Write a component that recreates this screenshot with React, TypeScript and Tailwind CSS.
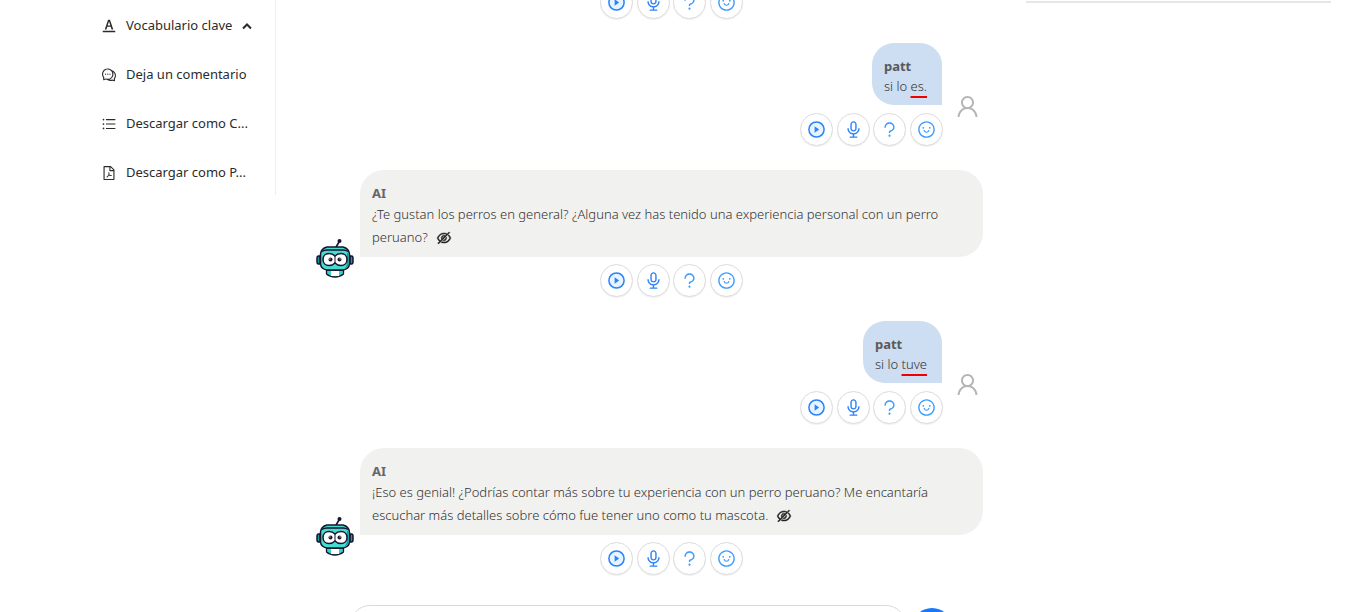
import type { ReactNode } from "react";
import {
  AiOutlineAudio,
  AiOutlineComment,
  AiOutlineEyeInvisible,
  AiOutlineFilePdf,
  AiOutlineFontColors,
  AiOutlineQuestion,
  AiOutlineSmile,
  AiOutlineUnorderedList,
  AiOutlineUser
} from "react-icons/ai";

function PlayIcon({ className }: { className?: string }) {
  return (
    <svg viewBox="0 0 20 20" className={className} aria-hidden="true">
      <circle cx="10" cy="10" r="8" fill="#e6f4ff" stroke="currentColor" strokeWidth="1.6" />
      <path d="M8 6.6v6.8l4.800-3.400z" fill="currentColor" />
    </svg>
  );
}

const menuItems = [
  { label: "Vocabulario clave", icon: AiOutlineFontColors, open: true },
  { label: "Deja un comentario", icon: AiOutlineComment },
  { label: "Descargar como C...", icon: AiOutlineUnorderedList },
  { label: "Descargar como P...", icon: AiOutlineFilePdf }
];

const actions = [
  { label: "Reproducir", icon: PlayIcon, color: "text-[#2b83fb]" },
  { label: "Grabar", icon: AiOutlineAudio, color: "text-[#2b83fb]" },
  { label: "Ayuda", icon: AiOutlineQuestion, color: "text-[#3b9cff]" },
  { label: "Reaccionar", icon: AiOutlineSmile, color: "text-[#3b9cff]" }
];

function Actions() {
  return (
    <div className="flex w-[143px] justify-between">
      {actions.map(({ label, icon: Icon, color }) => (
        <button
          key={label}
          type="button"
          aria-label={label}
          className={`flex size-[33px] items-center justify-center rounded-full border border-[#dcdcdc] bg-white shadow-[0_1px_1px_rgba(0,0,0,0.06)] ${color}`}
        >
          <Icon className="size-[19px]" />
        </button>
      ))}
    </div>
  );
}

function Robot() {
  return (
    <svg viewBox="0 0 40 40" className="h-10 w-10" aria-hidden="true">
      <path d="M20.500 10 24 4" stroke="#17132f" strokeWidth="1.6" />
      <circle cx="24.500" cy="3" r="2" fill="#17132f" />
      <path d="M5 18H3.500Q2 18 2 20.500v3Q2 26 3.500 26H5zM35 18h1.500q1.500 0 1.500 2.500v3q0 2.500-1.500 2.500H35z" fill="#169b9c" stroke="#17132f" strokeWidth="1.500" />
      <path d="M11.500 32v4q3.500 3 8.500 3t8.500-3v-4z" fill="#35d3c7" stroke="#17132f" strokeWidth="1.300" />
      <path d="M16 33h8v5h-8z" fill="#fff" />
      <path d="M12 9h16q6 1.500 6.500 7v10q-.5 5-6.500 6H12q-6-1-6.500-6V16q.5-5.500 6.500-7z" fill="#45ddd0" stroke="#17132f" strokeWidth="1.500" />
      <path d="M7 13.500q2-1.500 5-1.500h16q3 0 5 1.500" fill="none" stroke="#17132f" strokeWidth="1.500" />
      <path d="M32 15h1.500v11q-.5 3.500-4 4.500 2.500-2 2.500-5z" fill="#159a9e" />
      <path d="M14 15.500c2.800 0 4.500.9 6 2.500 1.500-1.600 3.200-2.500 6-2.500 3.600 0 6 2.600 6 6s-2.400 6-6 6c-2.800 0-4.500-.9-6-2.500-1.500 1.600-3.200 2.500-6 2.500-3.600 0-6-2.600-6-6s2.400-6 6-6z" fill="#fff" stroke="#17132f" strokeWidth="1.500" />
      <circle cx="15.500" cy="21.500" r="2" fill="#17132f" />
      <circle cx="24.500" cy="21.500" r="2" fill="#17132f" />
      <circle cx="14.900" cy="20.900" r=".6" fill="#fff" />
      <circle cx="25.100" cy="20.900" r=".6" fill="#fff" />
      <path d="M20 18v7" stroke="#17132f" strokeWidth="1" />
    </svg>
  );
}

function UserMessage({ children }: { children: ReactNode }) {
  return (
    <article className="flex items-start justify-end pr-[2px]">
      <div className="flex flex-col items-end gap-2">
        <div className="mr-px rounded-[22px] rounded-br-none bg-[#cdddf2] pt-[13px] pr-[15px] pb-2 pl-3">
          <h3 className="leading-5 font-bold text-[#595959]">patt</h3>
          <p className="leading-[21px] font-light text-[#333]">{children}</p>
        </div>
        <Actions />
      </div>
      <AiOutlineUser className="mt-[50px] ml-[11px] size-[27px] text-[#b5b5b5]" />
    </article>
  );
}

function AiMessage({ children }: { children: ReactNode }) {
  return (
    <article className="flex items-start">
      <div className="mt-[68px] mr-[5px] -ml-px w-10 shrink-0">
        <Robot />
      </div>
      <div className="flex flex-1 flex-col items-center gap-[7px]">
        <div className="w-full rounded-[24px] rounded-bl-none bg-[#f1f1ef] px-3 pt-[13px] pb-2">
          <h3 className="leading-5 font-bold text-[#666]">AI</h3>
          <p className="leading-[23px] font-light text-[#333]">
            {children}
            <button type="button" aria-label="Ocultar texto" className="ml-2 align-text-bottom text-[#222]">
              <AiOutlineEyeInvisible className="size-4" stroke="currentColor" strokeWidth="28" />
            </button>
          </p>
        </div>
        <Actions />
      </div>
    </article>
  );
}

function Mark({ children }: { children: ReactNode }) {
  return (
    <span className="underline decoration-[#f00000] decoration-2 underline-offset-[5px] [text-decoration-skip-ink:none]">
      {children}
    </span>
  );
}

export default function App() {
  return (
    <div className="grid h-screen grid-cols-[276px_1fr_340px] items-start overflow-hidden bg-white font-['Noto_Sans','Open_Sans',sans-serif] text-[13px]">
      <aside className="flex h-[195px] flex-col border-r border-[#eeeeee] pt-[6px] pb-[2px] pl-[101px]">
        <nav className="flex flex-1 flex-col justify-between">
          {menuItems.map(({ label, icon: Icon, open }) => (
            <a key={label} href="#" className="flex h-10 items-center whitespace-nowrap text-[#2b2b2b]">
              <Icon className="mr-[9px] size-4 shrink-0" />
              {label}
              {open && (
                <svg viewBox="0 0 10 10" className="ml-[10px] size-[10px]" fill="none" stroke="currentColor" strokeWidth="2">
                  <path d="M1 7.500 5 3.500 9 7.500" />
                </svg>
              )}
            </a>
          ))}
        </nav>
      </aside>

      <main className="-mt-[14px] flex flex-col gap-6 pr-[43px] pl-10">
        <div className="flex justify-center pl-[44px]">
          <Actions />
        </div>
        <UserMessage>
          si lo <Mark>es.</Mark>
        </UserMessage>
        <AiMessage>
          ¿Te gustan los perros en general? ¿Alguna vez has tenido una experiencia personal con un perro peruano?
        </AiMessage>
        <UserMessage>
          si lo <Mark>tuve</Mark>
        </UserMessage>
        <AiMessage>
          ¡Eso es genial! ¿Podrías contar más sobre tu experiencia con un perro peruano? Me encantaría escuchar más
          detalles sobre cómo fue tener uno como tu mascota.
        </AiMessage>
        <form className="mt-[6px] flex gap-[6px] pr-[31px] pl-[34px]">
          <input
            type="text"
            aria-label="Mensaje"
            className="h-[46px] min-w-0 flex-1 rounded-[20px] border border-[#d9d9d9] px-4 outline-none"
          />
          <button type="button" aria-label="Enviar" className="mt-[3px] size-10 shrink-0 rounded-full bg-[#1677ff]" />
        </form>
      </main>

      <section className="pt-px pr-[35px]">
        <hr className="border-t-2 border-[#e6e6e6]" />
      </section>
    </div>
  );
}
